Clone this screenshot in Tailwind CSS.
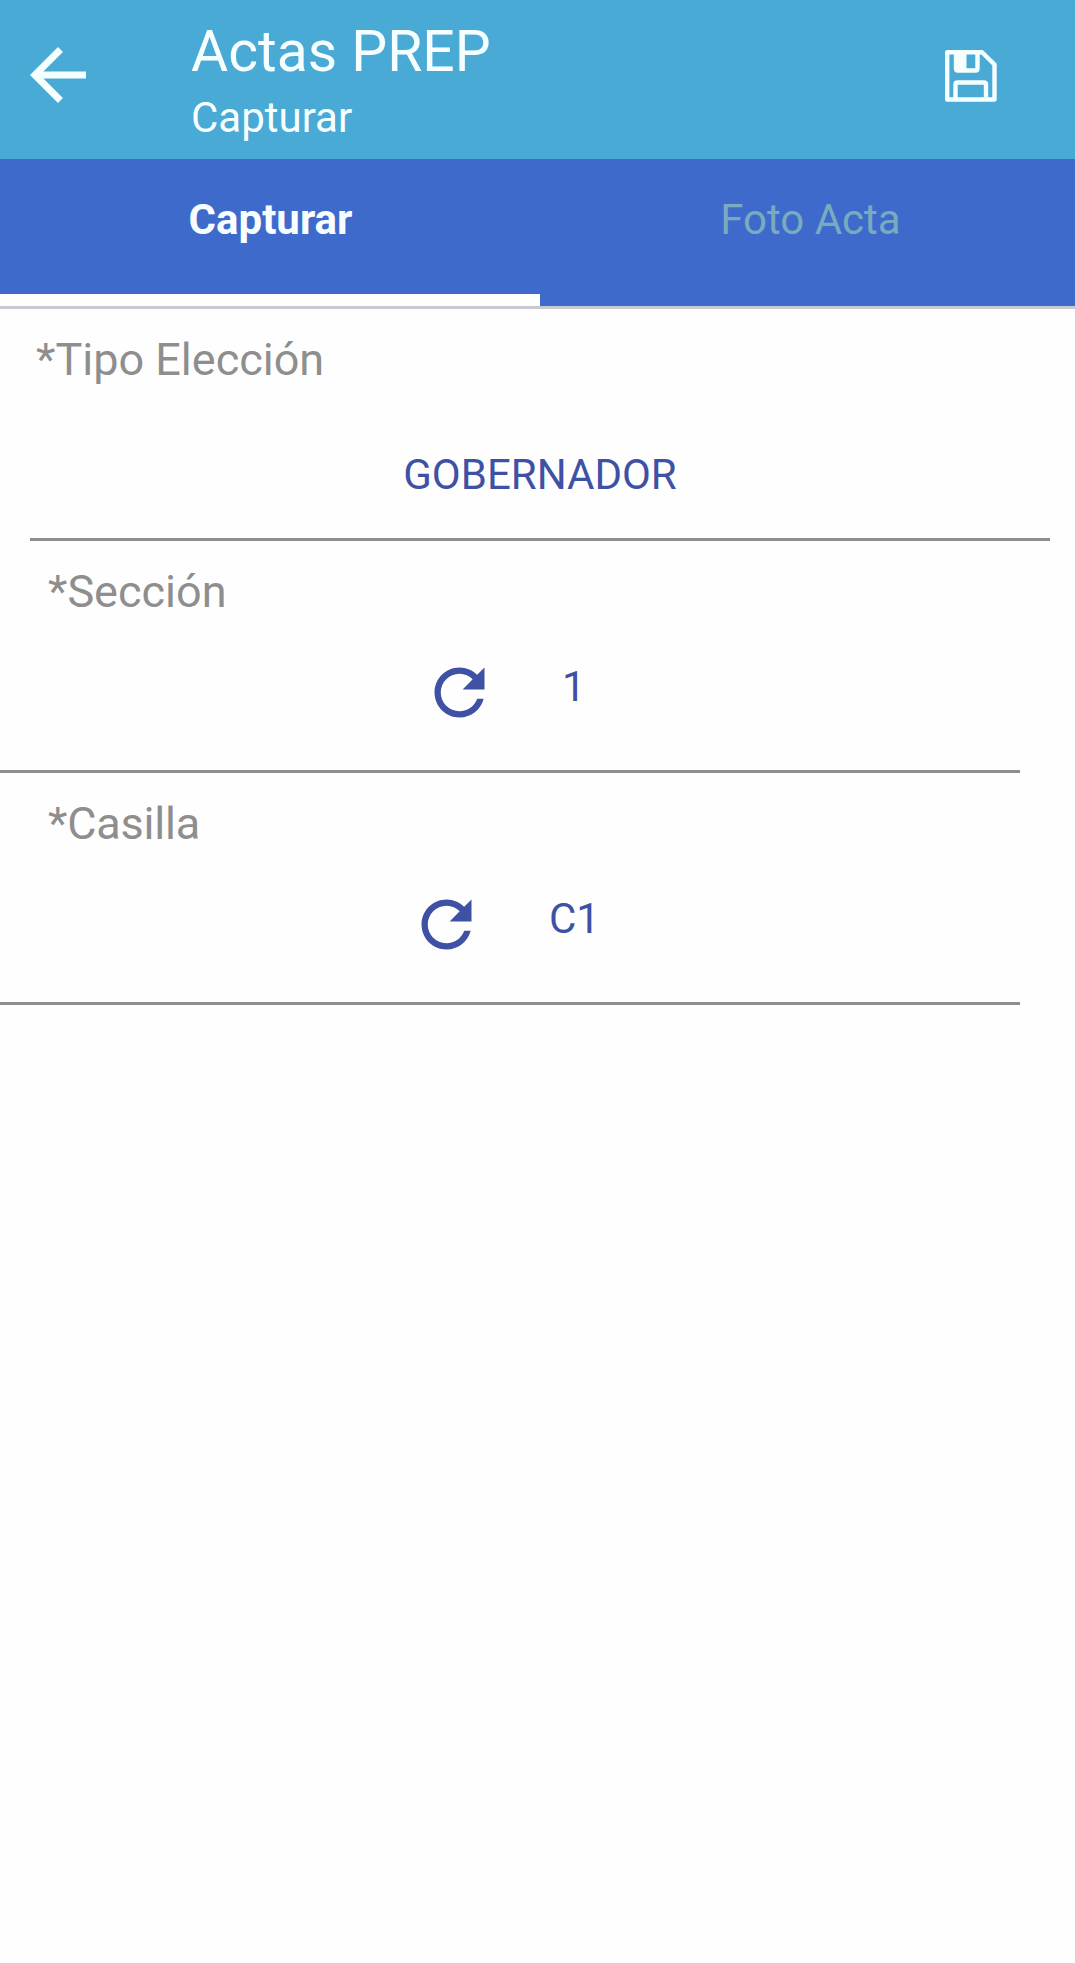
<!DOCTYPE html>
<html lang="es">
<head>
<meta charset="utf-8">
<title>Actas PREP</title>
<script src="https://cdn.jsdelivr.net/npm/@tailwindcss/browser@4"></script>
</head>
<body class="min-h-screen bg-[#fefefe] font-['Roboto',sans-serif]">
  <header class="flex h-[159px] bg-[#4aaad6] text-[#f6ffff]">
    <svg class="mt-[33px] ml-4 size-[84px] shrink-0" viewBox="0 0 24 24" fill="currentColor"><path d="M20 11H7.83l5.59-5.59L12 4l-8 8 8 8 1.41-1.41L7.83 13H20v-2z"/></svg>
    <div class="ml-[91px] flex-1 pt-5">
      <h1 class="text-[57px] leading-[64px]">Actas PREP</h1>
      <p class="mt-[10px] text-[42px] leading-[48px]">Capturar</p>
    </div>
    <svg class="mt-[50px] mr-[78px] h-[52px] w-[52px] shrink-0" viewBox="0 0 52 52" fill="none" stroke="currentColor" stroke-width="4.4" stroke-linejoin="round"><path d="M2.2 2.2H37L49.5 14.5V49.5H2.2Z"/><path d="M11 2.2V18.5Q11 20.5 13 20.5H30.5Q32.5 20.5 32.5 18.5V2.2M10.5 49.5V34.5Q10.5 32.5 12.5 32.5H39Q41 32.5 41 34.5V49.5"/><path d="M11 3H21.500V20.500H11Z" fill="currentColor" stroke="none"/></svg>
  </header>
  <nav class="grid h-[150px] grid-cols-[540px_1fr] border-b-[3px] border-[#c8cad2] bg-[#3e6bcb] text-center text-[42px] leading-[48px]">
    <div class="border-b-[12px] border-white pt-[37px] pl-px font-bold text-[#f8fdff]">Capturar</div>
    <div class="pt-[37px] pl-[6px] text-[#7aaac0]">Foto Acta</div>
  </nav>
  <main class="text-[42px] leading-[48px] text-[#3f51a5]">
    <section class="ml-[30px] mr-[25px] h-[232px] border-b-[3px] border-[#8e8e8e] pt-6">
      <h2 class="ml-1.5 text-[45px] leading-[54px] text-[#8e8e8e]">*Tipo Elección</h2>
      <p class="mt-[64px] text-center">GOBERNADOR</p>
    </section>
    <section class="mr-[55px] h-[232px] border-b-[3px] border-[#8e8e8e] pt-6">
      <h2 class="ml-12 text-[45px] leading-[54px] text-[#8e8e8e]">*Sección</h2>
      <div class="mt-9 flex">
        <svg class="ml-[422px] size-[75px]" viewBox="0 0 24 24" fill="currentColor"><path d="M17.65 6.35C16.2 4.9 14.21 4 12 4c-4.42 0-7.99 3.58-7.99 8s3.57 8 7.99 8c3.73 0 6.84-2.55 7.73-6h-2.08c-.82 2.33-3.04 4-5.65 4-3.31 0-6-2.69-6-6s2.69-6 6-6c1.66 0 3.14.69 4.22 1.78L13 11h7V4l-2.35 2.35z"/></svg>
        <p class="ml-[65px] mt-2">1</p>
      </div>
    </section>
    <section class="mr-[55px] h-[232px] border-b-[3px] border-[#8e8e8e] pt-6">
      <h2 class="ml-12 text-[45px] leading-[54px] tracking-[-0.2px] text-[#8e8e8e]">*Casilla</h2>
      <div class="mt-9 flex">
        <svg class="ml-[409px] size-[75px]" viewBox="0 0 24 24" fill="currentColor"><path d="M17.65 6.35C16.2 4.9 14.21 4 12 4c-4.42 0-7.99 3.58-7.99 8s3.57 8 7.99 8c3.73 0 6.84-2.55 7.73-6h-2.08c-.82 2.33-3.04 4-5.65 4-3.31 0-6-2.69-6-6s2.69-6 6-6c1.66 0 3.14.69 4.22 1.78L13 11h7V4l-2.35 2.35z"/></svg>
        <p class="ml-[65px] mt-2">C1</p>
      </div>
    </section>
  </main>
</body>
</html>
